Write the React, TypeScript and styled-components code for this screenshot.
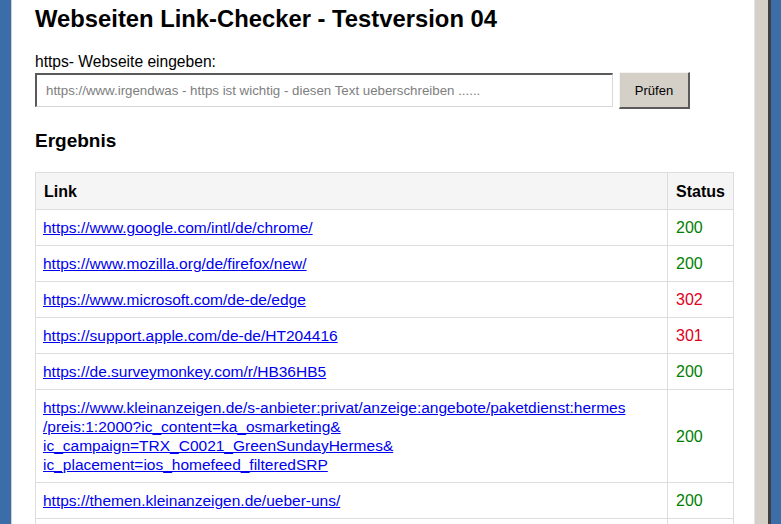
import React from "react";
import styled, { createGlobalStyle } from "styled-components";

const Global = createGlobalStyle`
  html, body { margin: 0; padding: 0; overflow: hidden; background: #ffffff; }
  body { font-family: "Liberation Sans", Arial, sans-serif; }
`;

const Frame = styled.div`
  display: flex;
  width: 781px;
  height: 524px;
  overflow: hidden;
`;

const WinEdge = styled.div<{ $w: number }>`
  width: ${(p) => p.$w}px;
  flex: none;
  background: #3b6ea8;
`;

const Content = styled.div`
  flex: 1;
  min-width: 0;
  background: #fff;
  border-left: 1px solid #cfcfcf;
  border-right: 1px solid #e4e4e4;
  padding: 5px 19px 0 23px;
  overflow: hidden;
`;

const Scrollbar = styled.div`
  width: 13px;
  flex: none;
  background: #d4d0c8;
  border-right: 3px solid #3f3f3f;
`;

const Title = styled.h1`
  margin: 0;
  font-size: 23.8px;
  font-weight: bold;
  color: #000;
  line-height: 27px;
`;

const Label = styled.div`
  margin-top: 21px;
  font-size: 15.6px;
  line-height: 18px;
  color: #000;
`;

const FormRow = styled.div`
  display: flex;
  align-items: flex-start;
  gap: 6px;
  margin-top: 1px;
`;

const Input = styled.input`
  box-sizing: border-box;
  width: 578px;
  height: 34px;
  margin-top: 1px;
  padding: 0 9px;
  border-style: solid;
  border-width: 2px 1px 1px 2px;
  border-color: #5a5a5a #d8d8d8 #d8d8d8 #5a5a5a;
  font-family: "Liberation Sans", Arial, sans-serif;
  font-size: 13.3px;
  outline: none;
  &::placeholder { color: #7e7e7e; }
`;

const Button = styled.button`
  box-sizing: border-box;
  width: 71px;
  height: 37px;
  background: #d4d0c8;
  border-style: solid;
  border-width: 1px 2px 2px 1px;
  border-color: #f4f4f4 #5a5a5a #5a5a5a #f4f4f4;
  font-family: "Liberation Sans", Arial, sans-serif;
  font-size: 13px;
  color: #000;
  padding: 0;
`;

const Subtitle = styled.h2`
  margin: 21px 0 0;
  font-size: 19px;
  line-height: 22px;
  font-weight: bold;
  color: #000;
`;

const Table = styled.table`
  margin-top: 20px;
  width: 699px;
  border-collapse: collapse;
  font-size: 16px;
`;

const Th = styled.th`
  background: #f5f5f5;
  text-align: left;
  font-weight: bold;
  padding: 9px 8px 8px;
  line-height: 19px;
  border: 1px solid #dddddd;
  color: #000;
`;

const Td = styled.td`
  padding: 8px 8px 8px 7px;
  line-height: 19px;
  border: 1px solid #dddddd;
  vertical-align: middle;
`;

const StatusCell = styled(Td)<{ $ok: boolean }>`
  width: 49px;
  padding-left: 8px;
  color: ${(p) => (p.$ok ? "#008000" : "#e0001a")};
`;

const StatusHead = styled(Th)`
  width: 49px;
`;

const Link = styled.a`
  color: #0000ee;
  font-size: 15.5px;
  text-decoration: underline;
`;

type Row = { parts: string[]; status: number };

const rows: Row[] = [
  { parts: ["https://www.google.com/intl/de/chrome/"], status: 200 },
  { parts: ["https://www.mozilla.org/de/firefox/new/"], status: 200 },
  { parts: ["https://www.microsoft.com/de-de/edge"], status: 302 },
  { parts: ["https://support.apple.com/de-de/HT204416"], status: 301 },
  { parts: ["https://de.surveymonkey.com/r/HB36HB5"], status: 200 },
  {
    parts: [
      "https://www.kleinanzeigen.de/s-anbieter:privat/anzeige:angebote/paketdienst:hermes",
      "/preis:1:2000?ic_content=ka_osmarketing&",
      "ic_campaign=TRX_C0021_GreenSundayHermes&",
      "ic_placement=ios_homefeed_filteredSRP",
    ],
    status: 200,
  },
  { parts: ["https://themen.kleinanzeigen.de/ueber-uns/"], status: 200 },
];

export default function App() {
  return (
    <>
      <Global />
      <Frame>
        <WinEdge $w={11} />
        <Content>
          <Title>Webseiten Link-Checker - Testversion 04</Title>
          <Label>https- Webseite eingeben:</Label>
          <FormRow>
            <Input placeholder="https://www.irgendwas - https ist wichtig - diesen Text ueberschreiben ......" />
            <Button>Prüfen</Button>
          </FormRow>
          <Subtitle>Ergebnis</Subtitle>
          <Table>
            <thead>
              <tr>
                <Th>Link</Th>
                <StatusHead>Status</StatusHead>
              </tr>
            </thead>
            <tbody>
              {rows.map((r, i) => (
                <tr key={i}>
                  <Td>
                    <Link href="#">
                      {r.parts.map((p, j) => (
                        <React.Fragment key={j}>
                          {j > 0 && <wbr />}
                          {p}
                        </React.Fragment>
                      ))}
                    </Link>
                  </Td>
                  <StatusCell $ok={r.status === 200}>{r.status}</StatusCell>
                </tr>
              ))}
              <tr>
                <Td>{"\u00a0"}</Td>
                <StatusCell $ok>{"\u00a0"}</StatusCell>
              </tr>
            </tbody>
          </Table>
        </Content>
        <Scrollbar />
        <WinEdge $w={10} />
      </Frame>
    </>
  );
}
